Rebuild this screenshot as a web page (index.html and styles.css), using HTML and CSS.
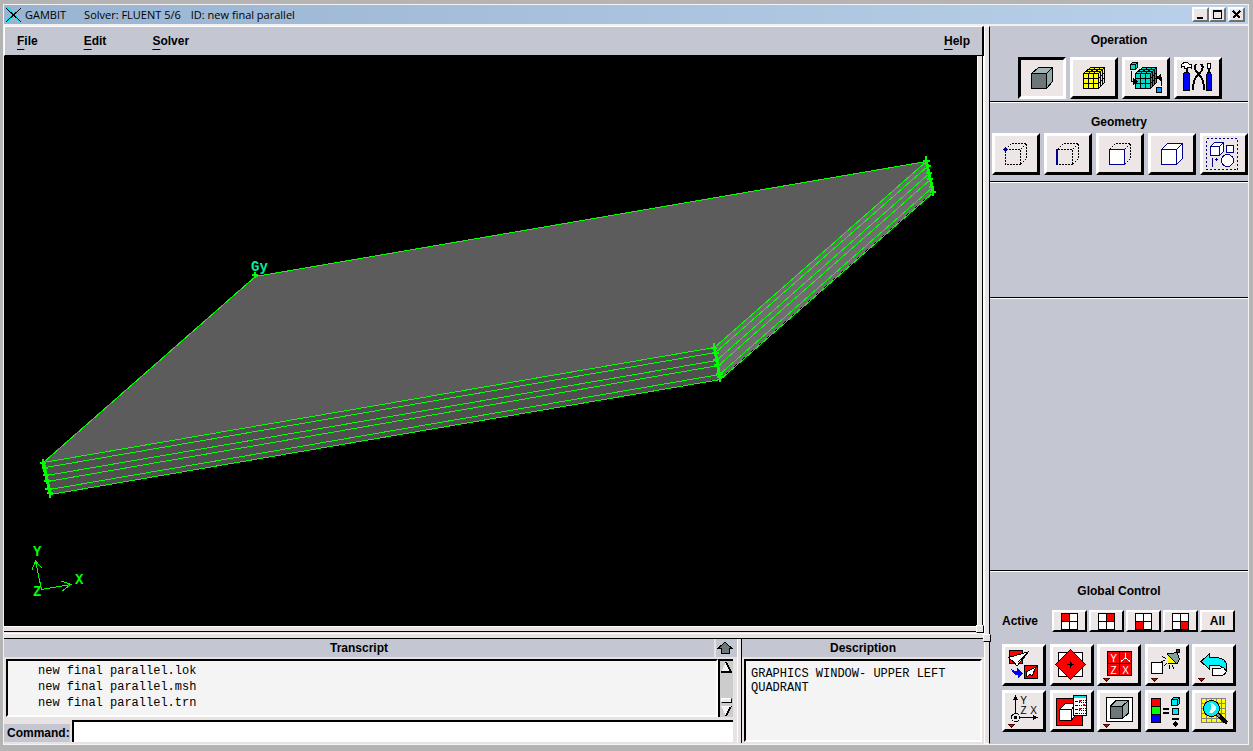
FILE: index.html
```html
<!DOCTYPE html>
<html lang="en">
<head>
<meta charset="utf-8">
<title>GAMBIT</title>
<link rel="stylesheet" href="styles.css">
</head>
<body>
<svg class="defs" aria-hidden="true">
  <defs>
    <path id="drop" d="M3.500 31.500H9.500L6.500 34Z" fill="#f00000" stroke="#500"/>
  </defs>
</svg>
<div class="window">
  <header class="titlebar">
    <svg class="logo" viewBox="0 0 17 16"><path d="M0 0H4L8 6V10L4 15H0L6 8Z" fill="#00e8f0"/><path d="M16 1L12 3L9 7V9L12 13L16 15L11 8Z" fill="#00e8f0"/><path d="M1 1L16 15M16 1L1 15" stroke="#000" fill="none"/></svg>
    <h1 class="title"><span>GAMBIT</span><span>Solver: FLUENT 5/6</span><span>ID: new final parallel</span></h1>
    <div class="win-buttons">
      <button class="win-btn" aria-label="Minimize"><svg viewBox="0 0 13 12"><path d="M3 9H9" stroke="#000" stroke-width="2"/></svg></button>
      <button class="win-btn" aria-label="Maximize"><svg viewBox="0 0 13 12"><path d="M2.500 2V9.500H10.500V2" stroke="#000" fill="none"/><path d="M2 2H11" stroke="#000" stroke-width="2"/></svg></button>
      <button class="win-btn win-close" aria-label="Close"><svg viewBox="0 0 13 12"><path d="M3 2L10 9M10 2L3 9" stroke="#000" stroke-width="2"/></svg></button>
    </div>
  </header>

  <div class="workspace">
    <main class="main">
      <nav class="menu">
        <button class="menu-item"><u>F</u>ile</button>
        <button class="menu-item"><u>E</u>dit</button>
        <button class="menu-item"><u>S</u>olver</button>
        <button class="menu-item menu-help"><u>H</u>elp</button>
      </nav>

      <section class="graphics">
        <svg class="scene" viewBox="4 56 973 570" role="img" aria-label="Graphics window">
          <path d="M43 462L714 347L926 161L255 276Z" fill="#5c5c5c"/>
          <path d="M43 462L714 347L720 379L50 495Z" fill="#505050"/>
          <path d="M714 347L926 161L933 192L720 379Z" fill="#6e6e6e"/>
          <g fill="none" stroke="#0f0">
            <path d="M43.500 462.500L255.500 276.500L926.500 161.500"/>
            <path d="M43.500 462.500L714.500 347.500L926.500 161.500M45.500 467.500L715.500 352.500L927.500 166.500M46.500 475.500L716.500 360.500L929.500 173.500M47.500 481.500L718.500 365.500L930.500 179.500M49.500 489.500L719.500 374.500L932.500 187.500M50.500 494.500L720.500 379.500L933.500 192.500"/>
            <path stroke-width="2" d="M43 459V465L50 495V498M714 343V349L720 377V382M926 156V163L933 190V196"/>
            <path stroke-width="3" d="M43.500 463L50 493M714.500 348L720 378M926.500 162L933 191"/>
            <path stroke-width="2" d="M40 463H46M42 468H48M43 475H49M44 481H51M45 489H52M47 493H53M711 348H717M712 353H719M713 360H719M714 365H721M716 374H723M717 377H723M923 161H930M926 166H931M926 173H932M927 179H933M929 187H934M930 192H936M252 275H258M255 272V278"/>
            <path d="M41.500 589.500L35.500 561M32 570L35.500 561L42 568M41.500 589.500L71 584.500M61 581L71 584.500L62 591"/>
          </g>
          <text class="tag tag-vertex" x="251" y="271">Gy</text>
          <text class="tag" x="33" y="556">Y</text>
          <text class="tag" x="75" y="584">X</text>
          <text class="tag" x="33" y="596">Z</text>
        </svg>
        <span class="sash-v"></span>
        <span class="grip"></span>
      </section>
      <div class="sash-h"></div>
      <div class="sash-h"></div>

      <div class="bottom">
        <section class="transcript">
          <div class="pane-head"><h2 class="heading">Transcript</h2><button class="expand" aria-label="Expand transcript"><svg viewBox="0 0 16 14"><path d="M8 1L15 7.500H12V12.500H4V7.500H1Z" fill="#6c7878" stroke="#000"/></svg></button></div>
          <div class="log-row">
            <div class="log"><p>new final parallel.lok</p><p>new final parallel.msh</p><p>new final parallel.trn</p></div>
            <div class="scroll">
              <svg viewBox="0 0 13 12"><path d="M6 1L1 11H11Z" fill="#f4f4f4"/><path d="M6 1L11 11H1" stroke="#000" stroke-width="2" fill="none"/></svg>
              <span class="thumb"></span>
              <svg viewBox="0 0 13 12"><path d="M1 1H11L6 11Z" fill="#f4f4f4"/><path d="M11 1L6 11" stroke="#000" stroke-width="2"/><path d="M1 1H11" stroke="#fff"/></svg>
            </div>
          </div>
          <div class="command"><label class="command-label" for="command">Command:</label><input class="command-input" id="command" type="text"></div>
        </section>
        <div class="splitter"></div>
        <section class="description">
          <div class="pane-head"><h2 class="heading">Description</h2></div>
          <p class="desc-text">GRAPHICS WINDOW- UPPER LEFT QUADRANT</p>
        </section>
      </div>
    </main>

    <div class="divider"><span class="grip"></span></div>

    <aside class="side">
      <section class="panel operation">
        <h2 class="heading">Operation</h2>
        <div class="tools">
          <button class="tool pressed" aria-label="Geometry"><svg viewBox="0 0 42 36"><g stroke="#000"><path d="M10.500 13.500L17.500 7.500H31.500L25.500 13.500Z" fill="#a4b4b4"/><path d="M25.500 13.500L31.500 7.500V21.500L25.500 28.500Z" fill="#90a8a8"/><path d="M10.500 13.500H25.500V28.500H10.500Z" fill="#6c7878"/></g></svg></button>
          <button class="tool" aria-label="Mesh"><svg viewBox="0 0 42 36"><g stroke="#000" fill="#ff0"><path d="M10.500 13.500L17.500 7.500H31.500V22.500L25.500 28.500H10.500Z"/><path d="M10.500 13.500H25.500V28.500M15.500 13.500V28.500M20.500 13.500V28.500M10.500 18.500H25.500M10.500 23.500H25.500M25.500 13.500L31.500 7.500M15.500 13.500L22.500 7.500M20.500 13.500L27.500 7.500M12.500 11.500H27.500V26.500M15.500 9.500H29.500V24.500M25.500 18.500L31.500 12.500M25.500 23.500L31.500 17.500" fill="none"/></g></svg></button>
          <button class="tool" aria-label="Zones"><svg viewBox="0 0 42 36"><g stroke="#000"><path d="M10.500 13.500L17.500 7.500H31.500V22.500L25.500 28.500H10.500Z" fill="#00dcc8"/><path d="M25.500 13.500L31.500 7.500V22.500L25.500 28.500Z" fill="#0094ff"/><path d="M10.500 13.500H25.500V28.500M15.500 13.500V28.500M20.500 13.500V28.500M10.500 18.500H25.500M10.500 23.500H25.500M15.500 13.500L22.500 7.500M20.500 13.500L27.500 7.500M12.500 11.500H27.500V26.500M15.500 9.500H29.500V24.500M25.500 18.500L31.500 12.500M25.500 23.500L31.500 17.500" fill="none"/><path d="M5.500 4.500L7.500 2.500H12.500V7.500L10.500 9.500H5.500ZM5.500 4.500H10.500V9.500M10.500 4.500L12.500 2.500" fill="#00dcc8"/><path d="M31.500 27.500H36.500V32.500H31.500Z" fill="#0094ff"/><path d="M6.500 11V21.500H9M36.500 26V17.500H34" fill="none"/></g><path d="M8 18L13 21.500L8 25ZM36 14L31 17.500L36 21Z"/></svg></button>
          <button class="tool" aria-label="Tools"><svg viewBox="0 0 42 36"><g stroke="#000"><path d="M9.500 8V13" stroke-width="2"/><path d="M4.500 4.500L7 2.500H10.500L12 4H14.500V8.500L12 7L10 8.500H8L7 6L4.500 7Z" fill="#fff"/><path d="M7.500 12.500H11.500L12.500 14V30.500H6.500V14Z" fill="#00f"/><path d="M31.500 8V13" stroke-width="2"/><path d="M30.500 3.500H33.500V8.500H30.500Z" fill="#fff"/><path d="M30.500 12.500H33.500L34.500 15V30.500H29.500V15Z" fill="#00f"/><path d="M19 4L17.500 7L19 11L24 17Q27 22 27 30M24 4L26 7L24.500 11L19 17Q16 22 16 30" fill="none" stroke-width="2"/></g></svg></button>
        </div>
      </section>

      <section class="panel geometry">
        <h2 class="heading">Geometry</h2>
        <div class="tools">
          <button class="tool" aria-label="Vertex"><svg viewBox="0 0 42 36"><path d="M10.500 13.500H25.500V28.500H10.500ZM10.500 13.500L16.500 7.500H31.500V22.500L25.500 28.500M25.500 13.500L31.500 7.500" fill="none" stroke="#000" stroke-dasharray="2 1"/><path d="M10.500 12L12 13.500L10.500 15L9 13.500Z" fill="#000088" stroke="#000088"/></svg></button>
          <button class="tool" aria-label="Edge"><svg viewBox="0 0 42 36"><path d="M10.500 13.500H25.500V28.500H10.500ZM10.500 13.500L16.500 7.500H31.500V22.500L25.500 28.500M25.500 13.500L31.500 7.500" fill="none" stroke="#000" stroke-dasharray="2 1"/><path d="M10 13V29" stroke="#000088" stroke-width="2"/></svg></button>
          <button class="tool" aria-label="Face"><svg viewBox="0 0 42 36"><path d="M10.500 13.500L16.500 7.500H31.500V22.500L25.500 28.500M25.500 13.500L31.500 7.500" fill="none" stroke="#000" stroke-dasharray="2 1"/><path d="M10.500 13.500H25.500V28.500H10.500Z" fill="#fff" stroke="#000088"/></svg></button>
          <button class="tool" aria-label="Volume"><svg viewBox="0 0 42 36"><path d="M10.500 13.500L16.500 7.500H31.500V22.500L25.500 28.500H10.500ZM10.500 13.500H25.500V28.500M25.500 13.500L31.500 7.500" fill="#fff" stroke="#000088"/></svg></button>
          <button class="tool" aria-label="Group"><svg viewBox="1 0 42 36"><g stroke="#000088" fill="#fff"><path d="M4.500 2.500H35.500V33.500H4.500Z" fill="none" stroke-dasharray="2 2"/><path d="M8.500 10.500L12.500 6.500H21.500V15.500L17.500 19.500H8.500ZM8.500 10.500H17.500V19.500M17.500 10.500L21.500 6.500M24.500 9.500H31.500V16.500H24.500Z"/><circle cx="25.500" cy="24.500" r="6"/><path d="M10.500 22V31M13 23.500H16M14.500 22V25"/></g></svg></button>
        </div>
      </section>

      <section class="panel blank-small"></section>
      <section class="panel blank-large"></section>

      <section class="panel global">
        <h2 class="heading">Global Control</h2>
        <div class="active-row">
          <span class="active-label">Active</span>
          <div class="quads">
            <button class="quad" aria-label="Upper left"><svg viewBox="0 0 17 17"><path d="M.500.500H16.500V16.500H.500Z" fill="#fff"/><path d="M0 0H8V8H0Z" fill="red"/><path d="M.500.500H16.500V16.500H.500ZM8.500 0V17M0 8.500H17" fill="none" stroke="#000"/></svg></button>
            <button class="quad" aria-label="Upper right"><svg viewBox="0 0 17 17"><path d="M.500.500H16.500V16.500H.500Z" fill="#fff"/><path d="M8 0H16V8H8Z" fill="red"/><path d="M.500.500H16.500V16.500H.500ZM8.500 0V17M0 8.500H17" fill="none" stroke="#000"/></svg></button>
            <button class="quad" aria-label="Lower left"><svg viewBox="0 0 17 17"><path d="M.500.500H16.500V16.500H.500Z" fill="#fff"/><path d="M0 8H8V16H0Z" fill="red"/><path d="M.500.500H16.500V16.500H.500ZM8.500 0V17M0 8.500H17" fill="none" stroke="#000"/></svg></button>
            <button class="quad" aria-label="Lower right"><svg viewBox="0 0 17 17"><path d="M.500.500H16.500V16.500H.500Z" fill="#fff"/><path d="M8 8H16V16H8Z" fill="red"/><path d="M.500.500H16.500V16.500H.500ZM8.500 0V17M0 8.500H17" fill="none" stroke="#000"/></svg></button>
            <button class="quad">All</button>
          </div>
        </div>
        <div class="controls">
          <button class="control" aria-label="Fit to window"><svg viewBox="0 0 38 36"><g stroke="#000"><path d="M4.500 3.500H17.500V16.500H4.500Z" fill="red"/><path d="M3.500 10.500L23 5L12 19L9.500 16Z" fill="#fff"/><path d="M13 15L23 5L18 12" fill="none"/><path d="M19.500 18.500H32.500V31.500H19.500Z" fill="red"/><path d="M21 25L31 20L27 29L25 27L22 30Z" fill="#fff"/></g><path d="M6 21Q8 24 12 24V21L17.500 26.500L13 31V28Q7 28 6 21Z" fill="#00f"/></svg></button>
          <button class="control" aria-label="Pivot"><svg viewBox="0 0 38 36"><g stroke="#000"><path d="M5.500 5.500H29.500V29.500H5.500Z" fill="#fff"/><path d="M17.500 2.500L32.500 17.500L17.500 32.500L2.500 17.500Z" fill="red"/><path d="M14 17.500H21M17.500 14V21"/></g><path d="M17.500 15.500L19.500 17.500L17.500 19.500L15.500 17.500Z"/></svg></button>
          <button class="control" aria-label="Select preset orientation"><svg viewBox="0 0 38 36"><path d="M7.500 4.500H31.500V28.500H7.500ZM19.500 4.500V28.500M7.500 16.500H31.500" fill="red" stroke="#000"/><path d="M25.500 6V11L21 14.500M25.500 11L30 14.500" fill="none" stroke="#fff"/><g class="glyph light"><text x="13.500" y="14.500">Y</text><text x="13.500" y="26.500">Z</text><text x="25.500" y="26.500">X</text></g><use href="#drop"/></svg></button>
          <button class="control" aria-label="Lights"><svg viewBox="0 0 38 36"><g stroke="#000"><path d="M3.500 15.500H14.500V26.500H3.500Z" fill="#fff" stroke-width="1.500"/><path d="M20.500 9L20.500 16L28 16Z" fill="#ff0"/><path d="M19 7L29 5.500L31.500 12L29 17Z" fill="#84a0a0"/><path d="M28.500 2H31.500V5H29Z" fill="#444"/><path d="M14 9.500L18 11.500M13 14.500L17 13.500M16 19L19 16M21 22L22 18M26 22L24 18" fill="none"/></g><path d="M20 9L27 16H20Z" fill="#ff0"/><use href="#drop"/></svg></button>
          <button class="control" aria-label="Undo"><svg viewBox="0 0 38 36"><path d="M17.500 21.500H25Q29 20 30.500 17L31.500 24Q30 28.500 26 28.500H17.500Z" fill="#fff" stroke="#000"/><path d="M6 14.500L14.500 6.500V10.500H22Q31.500 11.500 31.500 19V24Q29 20 24 18.500H14.500V22.500Z" fill="#00f4ff" stroke="#000"/><use href="#drop"/></svg></button>
          <button class="control" aria-label="Modify coordinate axes"><svg viewBox="0 0 38 36"><g stroke="#000" fill="none"><circle cx="10.500" cy="24.500" r="4"/><path d="M10.500 20V4M15 24.500H32"/></g><path d="M10.500 2L13 7H8ZM33 24.500L28 22V27ZM9 23H12V26H9Z"/><g class="glyph"><text x="18.500" y="10.500">Y</text><text x="18.500" y="20.500">Z</text><text x="28.500" y="20.500">X</text></g><use href="#drop"/></svg></button>
          <button class="control" aria-label="Specify display attributes"><svg viewBox="0 0 38 36"><g stroke="#000"><path d="M3.500 5.500H29.500V32.500H3.500Z" fill="red"/><path d="M6.500 16.500L12.500 10.500H22.500V21.500L18.500 27.500H6.500ZM6.500 16.500H18.500V27.500M18.500 16.500L22.500 10.500" fill="#fff"/><path d="M20.500 2.500H33.500V22.500H20.500Z" fill="#fff"/></g><path d="M21 3H33V5H21Z" fill="#00e0e0"/><path d="M22 8.500H25M22 12.500H25M22 16.500H25M22 20.500H25" stroke="#000"/><path d="M26 7.500H33M26 9.500H33M26 12.500H33M26 15.500H33M26 17.500H33M26 20.500H33" stroke="#000" stroke-dasharray="1 1"/><path d="M26 7H28V9H26ZM30 11H32V13H30ZM26 15H28V17H26Z" fill="#d00000"/></svg></button>
          <button class="control" aria-label="Render model"><svg viewBox="0 0 38 36"><g stroke="#000"><path d="M6.500 4.500H32.500V28.500H6.500Z" fill="#fff"/><path d="M10.500 13L16 7.500H28.500V20L22.500 25.500H10.500Z" fill="#a0b0b0"/><path d="M22.500 13L28.500 7.500V20L22.500 25.500Z" fill="#90a4a4"/><path d="M10.500 13H22.500V25.500H10.500Z" fill="#6c7878"/></g><use href="#drop"/></svg></button>
          <button class="control" aria-label="Specify color mode"><svg viewBox="0 0 38 36"><g stroke="#000"><path d="M3.500 5.500H12.500V13.500H3.500Z" fill="red"/><path d="M3.500 13.500H12.500V21.500H3.500Z" fill="#0f0"/><path d="M3.500 21.500H12.500V29.500H3.500Z" fill="#00f"/><path d="M15 16H21M15 20H21" stroke-width="2"/><path d="M23.500 6.500L25.500 4.500H31.500V10.500L29.500 12.500H23.500ZM23.500 6.500H29.500V12.500M29.500 6.500L31.500 4.500M24.500 15.500H30.500V21.500H24.500Z" fill="#00e8f0"/><path d="M24 25.500H31" stroke-width="2"/></g><path d="M27.500 28L30.500 31L27.500 34L24.500 31Z"/></svg></button>
          <button class="control" aria-label="Examine mesh"><svg viewBox="0 0 38 36"><path d="M6.500 5.500H30.500V29.500H6.500Z" fill="#ff0" stroke="#808080"/><path d="M11.500 5V30M16.500 5V30M21.500 5V30M26.500 5V30M6 10.500H31M6 15.500H31M6 20.500H31M6 25.500H31" stroke="#808080"/><path d="M21 20L32 30" stroke="#000" stroke-width="4"/><path d="M22 21L25 24" stroke="#888" stroke-width="2"/><circle cx="16.500" cy="15.500" r="8" fill="#00e8f0" stroke="#000"/><path d="M15 9.500Q22 11 21 16Q19 21 13 20Q18 17 15 9.500Z" fill="#e8ffff"/></svg></button>
        </div>
      </section>
    </aside>
  </div>
</div>
</body>
</html>
```
FILE: styles.css
```css
* { box-sizing: border-box; }
html, body { height: 100%; }
body {
  margin: 0;
  padding: 4px 4px 6px 3px;
  background: #b4b4b4;
  color: #000;
  font: bold 12px/16px "Liberation Sans", Arial, sans-serif;
}
h1, h2, p { margin: 0; font: inherit; }
button {
  padding: 0;
  border: 0;
  border-radius: 0;
  background: #ece6e6;
  color: inherit;
  font: inherit;
}
svg { display: block; shape-rendering: crispEdges; }
.defs { position: absolute; width: 0; height: 0; }

.window {
  display: flex;
  flex-direction: column;
  height: 100%;
  min-height: 640px;
  border: 1px solid #f4f2f2;
  background: #e8e2e2;
}

.titlebar {
  display: flex;
  align-items: center;
  flex: none;
  height: 21px;
  padding: 0 3px 0 1px;
  border-bottom: 2px solid #f0f0f0;
  background: linear-gradient(90deg, #99b4d1, #b9d1ea);
}
.logo { width: 17px; height: 16px; margin-right: 3px; }
.title {
  display: flex;
  font: 11px/18px "Open Sans", "Noto Sans", sans-serif;
  white-space: nowrap;
}
.title span { margin-right: 10px; }
.title span:first-child { margin-right: 18px; }
.win-buttons { display: flex; margin-left: auto; }
.win-btn {
  width: 17px;
  height: 15px;
  border: 2px solid;
  border-color: #fff #707070 #707070 #fff;
}
.win-btn svg { width: 13px; height: 12px; }
.win-close { margin-left: 2px; }

.workspace {
  display: grid;
  grid-template-columns: minmax(0, 1fr) 6px 258px;
  flex: 1;
  min-height: 0;
}

.main { display: flex; flex-direction: column; min-width: 0; }
.menu {
  display: flex;
  align-items: center;
  flex: none;
  gap: 46px;
  height: 30px;
  padding: 0 12px;
  border: 1px solid #fff;
  border-right: 2px solid #000;
  border-bottom-color: #000;
  background: #c4c6d2;
}
.menu-item { background: none; text-underline-offset: 4px; }
.menu-help { margin-left: auto; }

.graphics {
  position: relative;
  display: grid;
  grid-template-columns: minmax(0, 1fr) 7px;
  flex: 1;
  min-height: 0;
  background: #000;
}
.scene { width: 100%; height: 100%; min-height: 0; }
.tag { fill: #0f0; font: bold 14px "Liberation Mono", monospace; }
.tag-vertex { fill: #00f0a0; }
.sash-v {
  border: solid #fff;
  border-width: 0 1px;
  background: linear-gradient(90deg, #e8e2e2 4px, #000 4px);
}
.grip {
  position: absolute;
  right: 0;
  bottom: -7px;
  z-index: 1;
  width: 8px;
  height: 8px;
  border: 1px solid;
  border-color: #fff #000 #000 #fff;
  background: #e8e2e2;
}
.sash-h {
  flex: none;
  height: 6px;
  border-top: 1px solid #fff;
  border-bottom: 1px solid #000;
  background: #e8e2e2;
}
.sash-h + .sash-h { margin-top: 1px; }

.bottom {
  display: grid;
  grid-template-columns: minmax(0, 1fr) 5px 242px;
  flex: none;
  height: 105px;
}
.transcript, .description { display: flex; flex-direction: column; min-width: 0; }
.pane-head {
  display: flex;
  align-items: center;
  flex: none;
  height: 18px;
  background: #c4c6d2;
}
.pane-head .heading { flex: 1; }
.heading { text-align: center; }
.expand { width: 20px; height: 18px; margin-right: 3px; border-left: 2px solid #e8e2e2; background: #c4c6d2; }
.expand svg { width: 16px; height: 14px; margin: 0 auto; }
.log-row { display: flex; height: 60px; padding: 2px 4px 0 2px; }
.log {
  flex: 1;
  padding: 2px 30px;
  border: 2px solid;
  border-color: #000 #fff #fff #000;
  background: #f4f4f4;
  font: 12px/16px "Liberation Mono", monospace;
}
.scroll {
  display: flex;
  flex-direction: column;
  justify-content: space-between;
  width: 15px;
  border: solid #000;
  border-width: 2px 0 0 2px;
  background: #ccc;
}
.scroll svg { width: 13px; height: 12px; }
.thumb { height: 5px; margin: auto 1px 2px; border: 1px solid; border-color: #fff #000 #000 #fff; background: #eee; }
.command { display: flex; align-items: flex-end; gap: 2px; height: 27px; padding: 2px 4px 2px 0; }
.command-label { padding: 1px 0 1px 3px; background: #c4c6d2; }
.command-input {
  flex: 1;
  min-width: 0;
  height: 22px;
  padding: 0 4px;
  border: solid #000;
  border-width: 2px 0 0 2px;
  border-radius: 0;
  background: #fff;
  font: 12px/16px "Liberation Mono", monospace;
}
.splitter { margin-bottom: 1px; border-left: 1px solid #fff; border-right: 1px solid #000; background: #e8e2e2; }
.desc-text {
  flex: 1;
  margin: 2px;
  padding: 6px 5px;
  border: 2px solid;
  border-color: #000 #fff #fff #000;
  background: #f4f4f4;
  font: 12px/14px "Liberation Mono", monospace;
}

.divider {
  position: relative;
  border: 1px solid;
  border-color: #fff #000 #fff #fff;
  background: #e8e2e2;
}
.divider .grip { right: -2px; bottom: 101px; }

.side { display: flex; flex-direction: column; background: #c4c6d2; }
.panel { flex: none; border-bottom: 1px solid #fff; box-shadow: inset 0 -1px #000; }
.operation { height: 77px; padding-top: 6px; }
.operation .tools { margin-top: 9px; }
.geometry { height: 80px; padding-top: 11px; }
.geometry .tools { margin-top: 3px; }
.blank-small { height: 116px; }
.blank-large { flex: 1; }
.global { height: 172px; padding: 11px 12px 0; border: 0; box-shadow: none; }

.tools { display: flex; justify-content: center; gap: 4px; padding-left: 2px; }
.tool, .control {
  height: 42px;
  border: 3px solid;
  border-color: #fff #000 #000 #fff;
}
.tool { width: 48px; }
.tool svg { width: 42px; height: 36px; }
.control svg { width: 38px; height: 36px; }
.pressed { border-color: #000 #fff #fff #000; }

.active-row { display: flex; align-items: center; justify-content: space-between; margin-top: 11px; padding-right: 1px; }
.quads { display: flex; gap: 2px; }
.quad {
  width: 35px;
  height: 22px;
  border: 2px solid;
  border-color: #fff #000 #000 #fff;
}
.quad svg { width: 17px; height: 17px; margin: 0 auto; }
.controls {
  display: grid;
  grid-template-columns: repeat(5, 44px);
  justify-content: space-between;
  row-gap: 4px;
  margin-top: 12px;
}
.glyph { font: 10px "Liberation Sans", Arial, sans-serif; text-anchor: middle; }
.light { fill: #fff; }
```
